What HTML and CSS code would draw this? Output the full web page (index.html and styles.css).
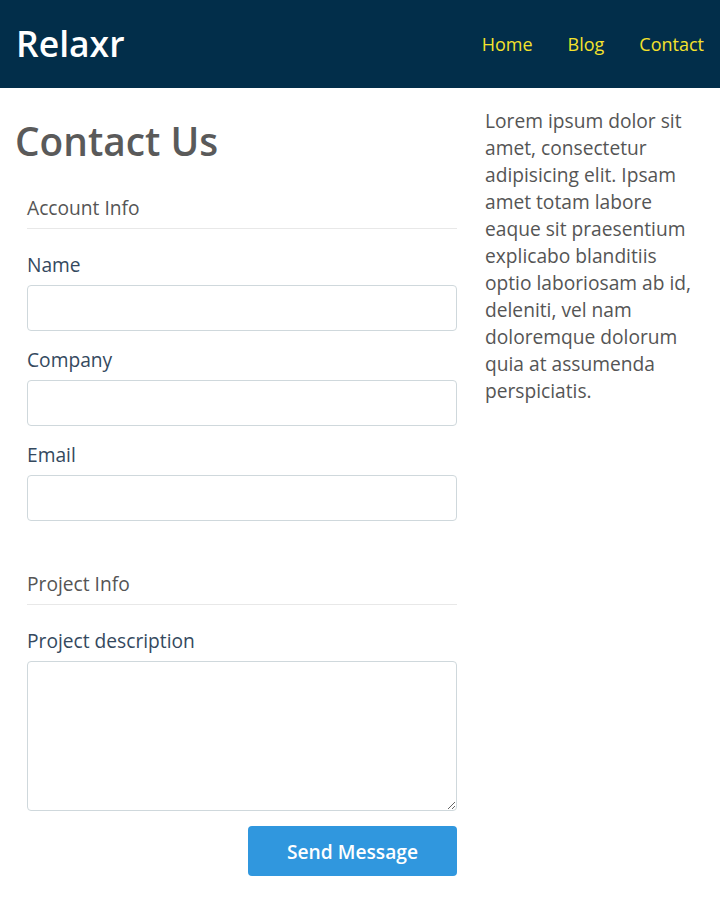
FILE: index.html
```html
<!DOCTYPE html>
<html lang="en">
<head>
<meta charset="utf-8">
<title>Relaxr - Contact</title>
<link rel="stylesheet" href="styles.css">
</head>
<body>
<header class="site-header">
  <div class="logo">Relaxr</div>
  <nav class="nav">
    <a href="#">Home</a>
    <a href="#">Blog</a>
    <a href="#">Contact</a>
  </nav>
</header>
<main class="main">
  <section class="form-col">
    <h1 class="page-title">Contact Us</h1>
    <form class="contact-form">
      <fieldset class="group">
        <legend class="group-title">Account Info</legend>
        <label class="field-label" for="name">Name</label>
        <input class="field-input" id="name" type="text">
        <label class="field-label" for="company">Company</label>
        <input class="field-input" id="company" type="text">
        <label class="field-label" for="email">Email</label>
        <input class="field-input" id="email" type="email">
      </fieldset>
      <fieldset class="group">
        <legend class="group-title">Project Info</legend>
        <label class="field-label" for="desc">Project description</label>
        <textarea class="field-textarea" id="desc"></textarea>
      </fieldset>
      <div class="actions">
        <button class="send-btn" type="submit">Send Message</button>
      </div>
    </form>
  </section>
  <aside class="side-col">
    <p class="side-text">Lorem ipsum dolor sit amet, consectetur adipisicing elit. Ipsam amet totam labore eaque sit praesentium explicabo blanditiis optio laboriosam ab id, deleniti, vel nam doloremque dolorum quia at assumenda perspiciatis.</p>
  </aside>
</main>
</body>
</html>
```
FILE: styles.css
```css
* { box-sizing: border-box; }
html, body { margin: 0; padding: 0; }
body {
  font-family: "Open Sans", "Noto Sans", sans-serif;
  background: #ffffff;
  color: #555555;
}
.site-header {
  height: 88px;
  background: #022e4a;
  display: flex;
  align-items: center;
  justify-content: space-between;
  padding: 0 16px 0 16px;
}
.logo {
  color: #ffffff;
  font-size: 35.5px;
  font-weight: 600;
  line-height: 1;
  margin-top: -1px;
}
.nav {
  display: flex;
  gap: 35px;
}
.nav a {
  color: #f4e22c;
  text-decoration: none;
  font-size: 18px;
  line-height: 27px;
}
.main {
  display: flex;
  padding-top: 20px;
}
.form-col {
  flex: 0 0 470px;
  padding: 0 13px 0 15px;
}
.side-col {
  flex: 1;
  padding: 0 15px;
}
.page-title {
  margin: 11px 0 31px;
  font-size: 38.8px;
  line-height: 44px;
  font-weight: 600;
  color: #5a5a5a;
}
.contact-form {
  padding: 0 0 0 12px;
}
.group {
  border: 0;
  margin: 0 0 34px;
  padding: 0;
  min-width: 0;
}
.group:last-of-type { margin-bottom: 0; }
.group-title {
  display: block;
  width: 100%;
  padding: 0 0 7px;
  margin: 0 0 22px;
  font-size: 19.2px;
  line-height: 27px;
  color: #555555;
  border-bottom: 1px solid #e8e8e8;
}
.field-label {
  display: block;
  font-size: 19.2px;
  line-height: 27px;
  color: #34495e;
  margin-bottom: 7px;
}
.field-input {
  display: block;
  width: 100%;
  height: 46px;
  margin: 0 0 15px;
  border: 1px solid #cfd8dc;
  border-radius: 4px;
  font: inherit;
  padding: 0 10px;
}
.field-textarea {
  display: block;
  width: 100%;
  height: 150px;
  margin: 0;
  border: 1px solid #cfd8dc;
  border-radius: 4px;
  font: inherit;
  padding: 8px 10px;
}
.actions {
  display: flex;
  justify-content: flex-end;
  margin-top: 15px;
}
.send-btn {
  width: 209px;
  height: 50px;
  border: 0;
  border-radius: 4px;
  background: #3097de;
  color: #ffffff;
  font-family: "Open Sans", "Noto Sans", sans-serif;
  font-size: 19.2px;
  font-weight: 600;
  cursor: pointer;
}
.side-text {
  margin: -1px 0 0;
  font-size: 19.2px;
  line-height: 27px;
  color: #555555;
}
```
